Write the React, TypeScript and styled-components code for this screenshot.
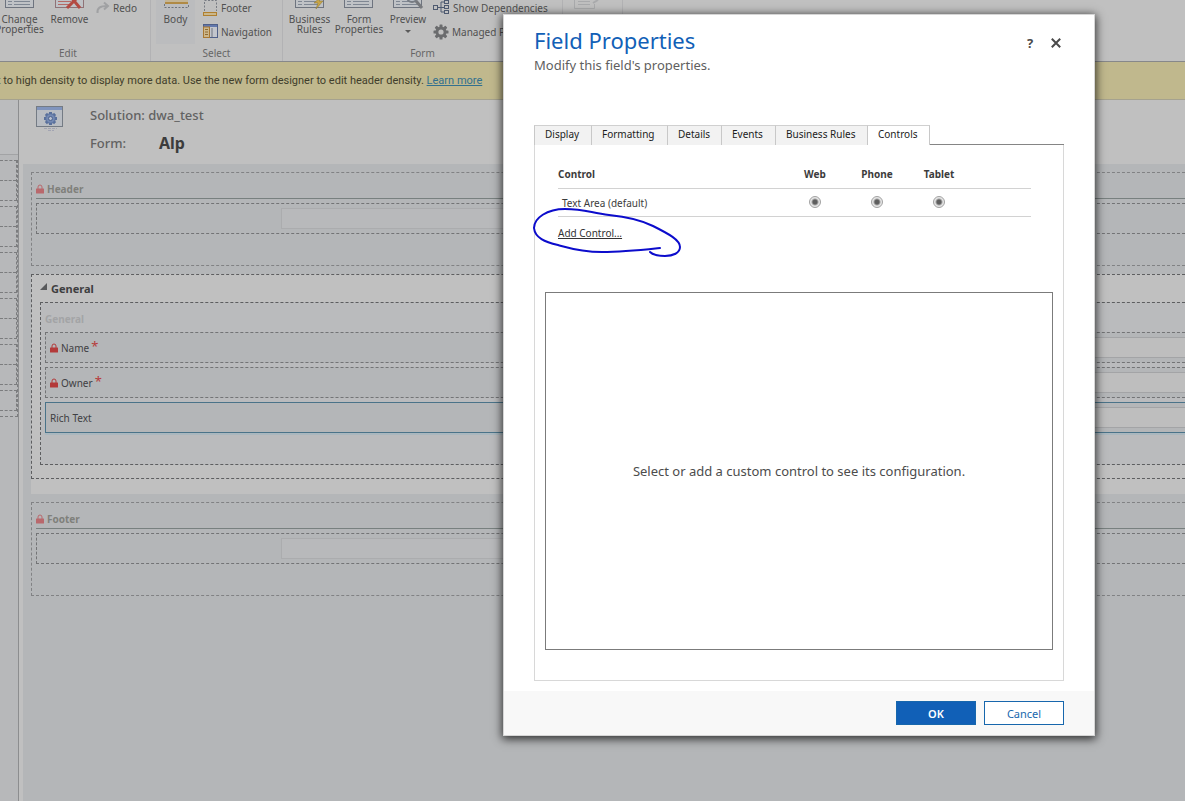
import React from "react";
import styled, { createGlobalStyle, css } from "styled-components";

const Global = createGlobalStyle`
  *, *::before, *::after { box-sizing: border-box; }
  html, body { margin: 0; padding: 0; }
  body {
    font-family: "Noto Sans", "Open Sans", sans-serif;
    font-size: 10px;
    color: #3b3b3b;
    background: #b4b5b7;
    overflow: hidden;
  }
  button, input { font: inherit; color: inherit; }
`;

const Page = styled.div`
  display: flex;
  flex-direction: column;
  min-height: 100vh;
  overflow: hidden;
`;

/* ---------- ribbon ---------- */

const Ribbon = styled.header`
  display: flex;
  align-items: flex-end;
  height: 62px;
  padding-right: 14px;
  margin-left: -14px;
  overflow: hidden;
  background: #c0c0c0;
  border-bottom: 1px solid #87888a;
  color: #505050;
`;

const Group = styled.section<{ $width: number }>`
  display: flex;
  flex-direction: column;
  flex: none;
  width: ${(p) => p.$width}px;
  border-right: 1px solid #b2b2b4;
`;

const GroupBody = styled.div`
  display: flex;
  height: 68px;
  padding-left: 5px;
`;

const GroupLabel = styled.div`
  height: 17px;
  line-height: 18px;
  text-align: center;
  color: #666;
`;

const BigButton = styled.button<{ $width: number; $lit?: boolean }>`
  display: flex;
  flex-direction: column;
  align-items: center;
  flex: none;
  width: ${(p) => p.$width}px;
  padding: 2px 0 0;
  border: 0;
  background: ${(p) => (p.$lit ? "#bbbcbe" : "transparent")};
  line-height: 10px;
  svg { flex: none; margin-bottom: 4px; }
`;

const Caret = styled.span`
  margin-top: 6px;
  border: 3px solid transparent;
  border-top-color: #5a5a5a;
`;

const SmallColumn = styled.div<{ $below?: number; $indent?: number }>`
  display: flex;
  flex-direction: column;
  justify-content: flex-end;
  padding-bottom: ${(p) => p.$below ?? 0}px;
  padding-left: ${(p) => p.$indent ?? 3}px;
`;

const SmallButton = styled.button`
  display: flex;
  align-items: center;
  gap: 3px;
  height: 24px;
  padding: 0 0 1px;
  border: 0;
  background: transparent;
  white-space: nowrap;
  svg { flex: none; }
`;

/* ---------- notification ---------- */

const Notice = styled.div`
  height: 38px;
  line-height: 38px;
  padding-left: 1px;
  margin-left: -4px;
  background: #c0b88d;
  border-bottom: 1px solid #a5a28f;
  color: #3f3d2b;
  font-family: Roboto, "Noto Sans", sans-serif;
  font-size: 11px;
  white-space: nowrap;
  a { color: #32708f; }
`;

/* ---------- form editor ---------- */

const Editor = styled.div`
  display: flex;
  flex: 1;
`;

const NavPane = styled.nav`
  flex: none;
  width: 19px;
  border-right: 1px solid #8c8d8f;
  background: #b7b8ba;
`;

const NavTop = styled.div`
  height: 55px;
  margin-bottom: 5px;
  background: #bbbcbe;
  border-bottom: 1px solid #a2a3a5;
`;

const NavBlock = styled.div`
  margin-bottom: 5px;
  width: 17px;
  border: 1px dashed #7b7c7e;
  border-left: 0;
`;

const NavCell = styled.div`
  height: 19px;
  & + & { height: 20px; border-top: 1px dashed #7b7c7e; }
`;

const NavFrame = styled.div`
  border: 1px dashed #7b7c7e;
  border-left: 0;
  border-top: 0;
  width: 18px;
`;

const FormPane = styled.main`
  display: flex;
  flex-direction: column;
  flex: 1;
  min-width: 0;
  background: #c0c0c0;
`;

const FormHead = styled.div`
  display: flex;
  gap: 27px;
  height: 64px;
  padding: 6px 0 0 17px;
`;

const FormFacts = styled.dl`
  display: grid;
  grid-template-columns: 69px auto;
  grid-template-rows: 20px 20px;
  row-gap: 8px;
  align-items: center;
  margin: -1px 0 0;
  font-size: 13px;
  font-weight: 500;
  color: #626262;
  line-height: 20px;
  white-space: nowrap;
  dt, dd { margin: 0; }
  dd.form { font-size: 16px; font-weight: 700; color: #3c3c3c; }
  dt.solution { grid-column: 1 / 3; }
`;

const Canvas = styled.div`
  flex: 1;
  margin-left: 4px;
  padding: 8px 0 0 8px;
  background: #b4b6b8;
`;

const dashed = css`
  border: 1px dashed #737476;
  border-right: 0;
`;

const Band = styled.section`
  ${dashed}
  border-color: #818284;
  height: 94px;
  padding-left: 4px;
`;

const BandTitle = styled.h2`
  display: flex;
  align-items: center;
  gap: 3px;
  height: 26px;
  padding-top: 7px;
  margin: 0 0 4px;
  border-bottom: 1px solid #78807f;
  font-size: 10px;
  line-height: 16px;
  font-weight: 700;
  color: #7f807b;
`;

const Cell = styled.div<{ $selected?: boolean }>`
  display: flex;
  align-items: center;
  height: 31px;
  margin-bottom: 4px;
  padding-left: 4px;
  background: #b4b6b8;
  ${dashed}
  ${(p) => p.$selected && css`border: 1px solid #4a7389; border-right: 0; box-shadow: 0 2px 0 #aab7be;`}
`;

const CellLabel = styled.label<{ $width: number }>`
  display: flex;
  align-items: center;
  gap: 3px;
  flex: none;
  width: ${(p) => p.$width}px;
  color: #3f4043;
  sup { color: #b73b3b; font-size: 13px; line-height: 10px; margin-left: -1px; align-self: flex-start; }
`;

const CellInput = styled.input<{ $short?: boolean }>`
  flex: ${(p) => (p.$short ? "0 1 500px" : "1")};
  min-width: 0;
  height: 21px;
  border: 1px solid ${(p) => (p.$short ? "#abacae" : "#a3a4a6")};
  border-right: 0;
  background: ${(p) => (p.$short ? "#b8b9bb" : "#bebebe")};
`;

const TabArea = styled.section`
  margin-top: 8px;
  margin-bottom: 8px;
  padding-bottom: 15px;
  background: #c0c0c0;
`;

const TabFrame = styled.div`
  ${dashed}
  border-color: #5d5e60;
  padding: 0 0 13px 8px;
`;

const TabTitle = styled.h2`
  display: flex;
  align-items: center;
  gap: 4px;
  height: 27px;
  margin: 0;
  font-size: 11px;
  font-weight: 700;
  color: #3e3e40;
  svg { margin-bottom: 5px; }
`;

const Section = styled.div`
  ${dashed}
  border-color: #5d5e60;
  padding: 0 0 27px 4px;
  background: #babbbd;
`;

const SectionTitle = styled.h3`
  margin: 0;
  height: 29px;
  line-height: 32px;
  font-size: 10px;
  font-weight: 700;
  color: #a3a4a6;
`;

/* ---------- dialog ---------- */

const Overlay = styled.div`
  position: absolute;
  inset: 0;
  display: flex;
  align-items: flex-start;
  justify-content: flex-end;
  padding: 14px 90px 0 0;
`;

const Dialog = styled.div`
  width: 592px;
  background: #fff;
  border: 1px solid #d6d6d6;
  box-shadow: 0 2px 9px 1px rgba(0, 0, 0, 0.75);
`;

const DialogHead = styled.div`
  display: flex;
  justify-content: space-between;
  height: 110px;
  padding: 9px 30px 0;
`;

const DialogTitle = styled.h1`
  margin: 0;
  font-size: 22px;
  line-height: 32px;
  font-weight: 400;
  color: #1160b7;
`;

const DialogSub = styled.p`
  margin: 0;
  font-size: 13px;
  line-height: 18px;
  color: #5f5f5f;
`;

const HeadButtons = styled.div`
  display: flex;
  align-items: flex-start;
  gap: 12px;
  padding-top: 9px;
  margin-right: 1px;
`;

const HeadButton = styled.button`
  display: flex;
  align-items: center;
  justify-content: center;
  width: 14px;
  height: 20px;
  padding: 0;
  border: 0;
  background: transparent;
  font-size: 13px;
  font-weight: 700;
  color: #4a4a4a;
`;

const TabRow = styled.div`
  display: flex;
  height: 20px;
  margin: 0 30px;
`;

const Tab = styled.button<{ $width: number; $active?: boolean }>`
  flex: none;
  width: ${(p) => p.$width}px;
  padding: 0 0 2px 10px;
  border: 0;
  border-top: 1px solid #d0d0d0;
  border-left: 1px solid #c8c8c8;
  background: ${(p) => (p.$active ? "#fff" : "#f2f2f2")};
  ${(p) => p.$active && css`border-right: 1px solid #c8c8c8;`}
  line-height: 17px;
  text-align: left;
  color: #1c1c1c;
`;

const TabRule = styled.div`
  flex: 1;
  border-bottom: 1px solid #858585;
`;

const Panel = styled.div`
  position: relative;
  display: flex;
  flex-direction: column;
  height: 536px;
  margin: 0 30px 10px;
  padding: 14px 10px 30px;
  border: 1px solid #d8d8d8;
  border-top: 0;
`;

const ControlTable = styled.table`
  width: 473px;
  margin-left: 13px;
  border-collapse: collapse;
  table-layout: fixed;
  th, td { padding: 1px 0 0; border-bottom: 1px solid #d2d2d2; text-align: center; }
  th { height: 29px; font-weight: 700; color: #3c3c3c; }
  td { height: 28px; padding-top: 0; color: #3c3c3c; }
  th:first-child, td:first-child { text-align: left; }
  td:first-child { padding: 1px 0 0 4px; }
  input { display: block; margin: 0 auto; }
`;

const Radio = styled.input`
  appearance: none;
  width: 12px;
  height: 12px;
  border: 1px solid #a2a2a2;
  border-radius: 50%;
  background: radial-gradient(circle, #5e5e5e 0 2px, #e6e6e6 4px);
`;

const AddLink = styled.a`
  align-self: flex-start;
  margin: 8px 0 0 13px;
  line-height: 16px;
  color: #333;
`;

const Config = styled.div`
  display: flex;
  align-items: center;
  justify-content: center;
  flex: 1;
  margin-top: 51px;
  border: 1px solid #7b7b7b;
  font-size: 13px;
  color: #4c4c4c;
`;

const Ink = styled.svg`
  position: absolute;
  left: -4px;
  top: 61px;
  pointer-events: none;
`;

const DialogFoot = styled.div`
  display: flex;
  justify-content: flex-end;
  gap: 8px;
  padding: 10px 30px;
  background: #f8f8f8;
`;

const FootButton = styled.button<{ $primary?: boolean }>`
  width: 80px;
  height: 24px;
  padding: 0;
  border: 1px solid #1767ad;
  background: ${(p) => (p.$primary ? "#1160b7" : "#fff")};
  color: ${(p) => (p.$primary ? "#fff" : "#1767ad")};
  font-size: 11px;
  font-weight: ${(p) => (p.$primary ? 600 : 400)};
`;

/* ---------- drawings ---------- */

const Lock = ({ faded }: { faded?: boolean }) => (
  <svg width="8" height="10" viewBox="0 0 8 10" aria-hidden="true">
    <path d="M2 5V3a2 2 0 0 1 4 0v2" fill="none" stroke={faded ? "#b9686c" : "#b33a3a"} />
    <rect y="4.5" width="8" height="5" rx=".5" fill={faded ? "#b9686c" : "#b33a3a"} />
  </svg>
);

const Sheet = ({ mark }: { mark?: "x" | "bolt" | "lens" }) => (
  <svg width="32" height="32" viewBox="0 0 32 32" aria-hidden="true">
    <rect x="1.5" y="4.5" width="28" height="25" fill="#bfc2c6" stroke={mark === "x" ? "#8f7377" : "#6e747f"} />
    <path
      d={mark === "x" ? "M4 23.500h13M4 26.500h13" : "M4 23.500h4M10 23.500h16M4 26.500h4M10 26.500h16"}
      stroke={mark === "x" ? "#b56a66" : "#7f8793"}
    />
    {mark === "x" && <path d="M13 30 26 17M16 18l10 12" stroke="#b34a42" strokeWidth="3" />}
    {mark === "bolt" && <path d="m27 19-7 6h4l-2 6 7-8h-4l3-4z" fill="#c9a648" stroke="#8f7a3c" strokeWidth=".6" />}
    {mark === "lens" && (
      <>
        <circle cx="20" cy="19" r="5" fill="#bcc3cb" stroke="#777c84" strokeWidth="2" />
        <path d="m24 23 6 7" stroke="#77797d" strokeWidth="3" />
      </>
    )}
  </svg>
);

const PaleSheet = () => (
  <svg width="26" height="32" viewBox="0 0 26 32" aria-hidden="true" stroke="#a9aaac">
    <path d="M1.500 4v26.500h20V26" fill="none" />
    <path d="M5 23.500h12M5 26.500h12" />
    <path d="m20 25 5-3" strokeWidth="2" />
  </svg>
);

const BodyIcon = () => (
  <svg width="32" height="32" viewBox="0 0 32 32" aria-hidden="true">
    <rect x="5" y="2" width="23" height="24" fill="#c4b595" />
    <path d="M5 25h23" stroke="#b08a45" strokeWidth="2" />
    <path d="M4.500 26v3.500h24V26" fill="none" stroke="#6f747b" strokeDasharray="2 1.500" />
  </svg>
);

const RedoIcon = () => (
  <svg width="14" height="14" viewBox="0 0 14 14" aria-hidden="true">
    <path d="M1.500 12C1 7 4 5 11 5M8 1.500 12 5 8 8.500" fill="none" stroke="#a0a1a3" strokeWidth="2" />
  </svg>
);

const FooterIcon = () => (
  <svg width="15" height="16" viewBox="0 0 15 16" aria-hidden="true">
    <path d="M1.500 11V.5h12V11" fill="none" stroke="#777b83" strokeDasharray="2 1.500" />
    <rect x=".5" y="12.500" width="13" height="3" fill="#c9b78c" stroke="#b07f2e" />
  </svg>
);

const NavigationIcon = () => (
  <svg width="15" height="15" viewBox="0 0 15 15" aria-hidden="true">
    <rect x=".5" y=".5" width="14" height="13" fill="#c2c5cc" stroke="#4f5f88" />
    <path d="M1 2h13" stroke="#6278ad" strokeWidth="2" />
    <rect x=".5" y="3" width="6" height="10.500" fill="#cdb78b" stroke="#a97832" />
    <path d="M2 5.500h3M2 8h3M2 10.500h3" stroke="#8d6a34" />
    <path d="M9 4v9" stroke="#6e7480" />
  </svg>
);

const DependenciesIcon = () => (
  <svg width="17" height="15" viewBox="0 0 17 15" aria-hidden="true" fill="none" stroke="#4e5a70">
    <rect x=".5" y="5.500" width="4" height="4" />
    <rect x="11.500" y=".5" width="4" height="3" />
    <rect x="11.500" y="5.500" width="4" height="3" />
    <rect x="11.500" y="10.500" width="4" height="3" />
    <path d="M5 7.500h6M11 2H8v10h3" />
  </svg>
);

const Gear = ({ size, color, hole }: { size: number; color: string; hole: string }) => (
  <svg width={size} height={size} viewBox="0 0 16 16" aria-hidden="true">
    {[0, 45, 90, 135].map((a) => (
      <rect key={a} x="6.500" y=".5" width="3" height="15" rx=".6" fill={color} transform={`rotate(${a} 8 8)`} />
    ))}
    <circle cx="8" cy="8" r="5.500" fill={color} />
    <circle cx="8" cy="8" r="2.600" fill={hole} />
  </svg>
);

const SolutionIcon = () => (
  <svg width="27" height="26" viewBox="0 0 27 26" aria-hidden="true">
    <rect x=".5" y=".5" width="26" height="20" fill="#b9bdc3" stroke="#747b84" />
    <rect x="1" y="1" width="25" height="3" fill="#8094bd" />
    <path d="M8 22.500h13M12 24.500h6" stroke="#a2a4b2" strokeDasharray="3 1" />
    {[0, 45, 90, 135].map((a) => (
      <rect key={a} x="13" y="6" width="3" height="13" fill="#586f9b" transform={`rotate(${a} 14.500 12.500)`} />
    ))}
    <circle cx="14.500" cy="12.500" r="4.800" fill="#7389b3" stroke="#586f9b" />
    <circle cx="14.500" cy="12.500" r="2" fill="#b9c1cf" stroke="#4f648f" />
  </svg>
);

const tabs: [string, number][] = [
  ["Display", 57],
  ["Formatting", 76],
  ["Details", 54],
  ["Events", 54],
  ["Business Rules", 92],
  ["Controls", 63],
];

const clients = ["Web", "Phone", "Tablet"];

const fields = [
  { id: "name", label: "Name", locked: true },
  { id: "owner", label: "Owner", locked: true },
  { id: "rich", label: "Rich Text", locked: false },
];

const LockedBand = ({ title }: { title: string }) => (
  <Band>
    <BandTitle><Lock faded />{title}</BandTitle>
    <Cell>
      <CellLabel $width={240} htmlFor={title} aria-label={title} />
      <CellInput id={title} $short readOnly />
    </Cell>
  </Band>
);

export default function App() {
  return (
    <>
      <Global />
      <Page>
        <Ribbon>
          <Group $width={165}>
            <GroupBody>
              <BigButton $width={57}><Sheet />Change<br />Properties</BigButton>
              <BigButton $width={43}><Sheet mark="x" />Remove</BigButton>
              <SmallColumn $below={24} $indent={5}>
                <SmallButton><RedoIcon />Redo</SmallButton>
              </SmallColumn>
            </GroupBody>
            <GroupLabel>Edit</GroupLabel>
          </Group>
          <Group $width={132}>
            <GroupBody>
              <BigButton $width={39} $lit><BodyIcon />Body</BigButton>
              <SmallColumn $indent={8}>
                <SmallButton><FooterIcon />Footer</SmallButton>
                <SmallButton><NavigationIcon />Navigation</SmallButton>
              </SmallColumn>
            </GroupBody>
            <GroupLabel>Select</GroupLabel>
          </Group>
          <Group $width={280}>
            <GroupBody>
              <BigButton $width={43}><Sheet mark="bolt" />Business<br />Rules</BigButton>
              <BigButton $width={56}><Sheet />Form<br />Properties</BigButton>
              <BigButton $width={42}><Sheet mark="lens" />Preview<Caret /></BigButton>
              <SmallColumn $indent={4}>
                <SmallButton><DependenciesIcon />Show Dependencies</SmallButton>
                <SmallButton><Gear size={16} color="#6b6c6e" hole="#c0c0c0" />Managed Properties</SmallButton>
              </SmallColumn>
            </GroupBody>
            <GroupLabel>Form</GroupLabel>
          </Group>
          <Group $width={60}>
            <GroupBody>
              <BigButton $width={36} aria-label="Form"><PaleSheet /></BigButton>
            </GroupBody>
            <GroupLabel />
          </Group>
        </Ribbon>

        <Notice>
          t to high density to display more data. Use the new form designer to edit header density.{" "}
          <a href="#learn">Learn more</a>
        </Notice>

        <Editor>
          <NavPane>
            <NavTop />
            <NavFrame>
              {[2, 2, 2, 2, 2, 1].map((cells, i) => (
                <NavBlock key={i}>
                  {Array.from({ length: cells }, (_, n) => <NavCell key={n} />)}
                </NavBlock>
              ))}
            </NavFrame>
          </NavPane>

          <FormPane>
            <FormHead>
              <SolutionIcon />
              <FormFacts>
                <dt className="solution">Solution: dwa_test</dt>
                <dt>Form:</dt>
                <dd className="form">Alp</dd>
              </FormFacts>
            </FormHead>
            <Canvas>
              <LockedBand title="Header" />
              <TabArea>
                <TabFrame>
                  <TabTitle>
                    <svg width="7" height="7" viewBox="0 0 7 7" aria-hidden="true"><path d="M7 0v7H0z" fill="#58595b" /></svg>
                    General
                  </TabTitle>
                  <Section>
                    <SectionTitle>General</SectionTitle>
                    {fields.map((f) => (
                      <Cell key={f.id} $selected={!f.locked}>
                        <CellLabel $width={480} htmlFor={f.id}>
                          {f.locked && <Lock />}
                          {f.label}
                          {f.locked && <sup>*</sup>}
                        </CellLabel>
                        <CellInput id={f.id} readOnly />
                      </Cell>
                    ))}
                  </Section>
                </TabFrame>
              </TabArea>
              <LockedBand title="Footer" />
            </Canvas>
          </FormPane>
        </Editor>
      </Page>

      <Overlay>
        <Dialog role="dialog" aria-labelledby="dialog-title">
          <DialogHead>
            <div>
              <DialogTitle id="dialog-title">Field Properties</DialogTitle>
              <DialogSub>Modify this field's properties.</DialogSub>
            </div>
            <HeadButtons>
              <HeadButton>?</HeadButton>
              <HeadButton aria-label="Close">
                <svg width="10" height="10" viewBox="0 0 10 10" aria-hidden="true">
                  <path d="m.8.8 8.400 8.400M9.200.8.8 9.200" stroke="#4a4a4a" strokeWidth="2" />
                </svg>
              </HeadButton>
            </HeadButtons>
          </DialogHead>
          <TabRow role="tablist">
            {tabs.map(([name, width]) => (
              <Tab key={name} role="tab" $width={width} $active={name === "Controls"} aria-selected={name === "Controls"}>
                {name}
              </Tab>
            ))}
            <TabRule />
          </TabRow>
          <Panel>
            <ControlTable>
              <colgroup>
                <col />
                <col width="62" />
                <col width="62" />
                <col width="62" />
                <col width="61" />
              </colgroup>
              <thead>
                <tr>
                  <th>Control</th>
                  {clients.map((c) => <th key={c}>{c}</th>)}
                  <th />
                </tr>
              </thead>
              <tbody>
                <tr>
                  <td>Text Area (default)</td>
                  {clients.map((c) => (
                    <td key={c}><Radio type="radio" name={c} aria-label={c} defaultChecked /></td>
                  ))}
                  <td />
                </tr>
              </tbody>
            </ControlTable>
            <AddLink href="#add">Add Control...</AddLink>
            <Config>Select or add a custom control to see its configuration.</Config>
            <Ink width="152" height="54" viewBox="0 0 152 54" aria-hidden="true">
              <path
                d="M129 42C110 44 92 46 71 46C50 46 38 42 27 39C14 36 4 32 3 22C3 12 16 3 34 3C54 3 60 7 78 9C98 11 110 14 122 20C138 28 149 34 149 41C149 47 142 50 134 50C128 50 122 49 119 46"
                fill="none" stroke="#0c0ccc" strokeWidth="2" strokeLinecap="round"
              />
            </Ink>
          </Panel>
          <DialogFoot>
            <FootButton $primary>OK</FootButton>
            <FootButton>Cancel</FootButton>
          </DialogFoot>
        </Dialog>
      </Overlay>
    </>
  );
}
